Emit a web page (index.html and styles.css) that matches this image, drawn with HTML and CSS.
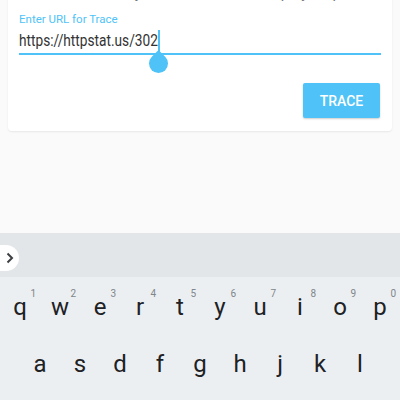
FILE: index.html
```html
<!DOCTYPE html>
<html lang="en">
<head>
<meta charset="UTF-8">
<title>Redirect Trace</title>
<link rel="stylesheet" href="styles.css">
</head>
<body>

<!-- CONTENT -->
<div class="screen">
  <div class="card">
    <p class="intro">Follow every redirect of a URL step by step</p>
    <label class="field-label">Enter URL for Trace</label>
    <div class="field">
      <span class="value"><span>https://httpstat.us/302</span></span><span class="caret"><i class="handle"></i></span>
    </div>
    <div class="actions">
      <button class="btn">TRACE</button>
    </div>
  </div>
</div>

<!-- KEYBOARD -->
<div class="keyboard">
  <div class="toolbar">
    <div class="expand">
      <svg width="8" height="12" viewBox="0 0 8 12"><path d="M1.5 1.5 L6 6 L1.5 10.5" fill="none" stroke="#3c4043" stroke-width="2"/></svg>
    </div>
  </div>
  <div class="row">
    <div class="key">q<sup>1</sup></div>
    <div class="key">w<sup>2</sup></div>
    <div class="key">e<sup>3</sup></div>
    <div class="key">r<sup>4</sup></div>
    <div class="key">t<sup>5</sup></div>
    <div class="key">y<sup>6</sup></div>
    <div class="key">u<sup>7</sup></div>
    <div class="key">i<sup>8</sup></div>
    <div class="key">o<sup>9</sup></div>
    <div class="key">p<sup>0</sup></div>
  </div>
  <div class="row row-2">
    <div class="key">a</div>
    <div class="key">s</div>
    <div class="key">d</div>
    <div class="key">f</div>
    <div class="key">g</div>
    <div class="key">h</div>
    <div class="key">j</div>
    <div class="key">k</div>
    <div class="key">l</div>
  </div>
</div>

</body>
</html>
```

FILE: styles.css
```css
body {
  margin: 0;
  height: 400px;
  overflow: hidden;
  display: flex;
  flex-direction: column;
  font-family: Roboto, 'Noto Sans', sans-serif;
  background: #fafafa;
}
.screen {
  flex: 0 0 233px;
  padding: 0 8px;
}
.card {
  background: #fff;
  border-radius: 0 0 4px 4px;
  box-shadow: 0 1px 2px rgba(0,0,0,0.08);
  padding: 0 11px 13px;
}
.intro {
  margin: -17px 0 0;
  font-size: 15px;
  line-height: 20px;
  color: #777;
  text-align: center;
}
.field-label {
  display: block;
  margin-top: 8px;
  font-size: 11.5px;
  line-height: 16px;
  color: #4fc3f7;
}
.field {
  margin-top: 4px;
  padding-bottom: 2px;
  border-bottom: 2px solid #4fc3f7;
  font-size: 16px;
  line-height: 20px;
  color: #333;
  display: flex;
  align-items: flex-start;
}
.value {
  display: inline-block;
  width: 139px;
  white-space: nowrap;
}
.value span {
  display: inline-block;
  transform: scaleX(0.855);
  transform-origin: left center;
}
.caret {
  position: relative;
  display: inline-block;
  width: 2px;
  height: 24px;
  margin-top: -1px;
  margin-bottom: -3px;
  background: #4fc3f7;
}
.handle {
  position: absolute;
  left: -9px;
  top: 24px;
  width: 19px;
  height: 19px;
  background: #4fc3f7;
  border-radius: 0 50% 50% 50%;
  transform: rotate(45deg);
}
.actions {
  display: flex;
  justify-content: flex-end;
  margin-top: 28px;
  padding-right: 1px;
}
.btn {
  width: 77px;
  height: 35px;
  border: none;
  border-radius: 2px;
  background: #4fc3f7;
  color: #fff;
  font-family: Roboto, sans-serif;
  font-size: 14px;
  font-weight: 500;
  box-shadow: 0 1px 2px rgba(0,0,0,0.2);
}
.keyboard {
  flex: 1;
  background: #eceff1;
}
.toolbar {
  height: 44px;
  background: #e3e6e9;
  display: flex;
  align-items: center;
}
.expand {
  width: 19px;
  height: 26px;
  margin-top: 6px;
  background: #fff;
  border-radius: 0 13px 13px 0;
  display: flex;
  align-items: center;
  justify-content: center;
}
.row {
  display: flex;
}
.row-2 {
  padding-left: 20px;
}
.key {
  position: relative;
  width: 40px;
  height: 57px;
  padding-top: 18px;
  box-sizing: border-box;
  text-align: center;
  font-size: 24px;
  line-height: 24px;
  color: #202124;
}
.key sup {
  position: absolute;
  right: 4px;
  top: 12px;
  font-size: 10px;
  line-height: 10px;
  color: #80868b;
}
```
